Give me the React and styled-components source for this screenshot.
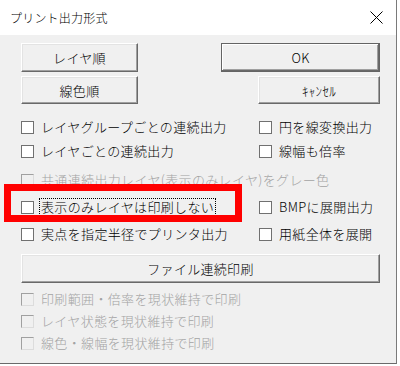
import React from "react";
import styled, { createGlobalStyle } from "styled-components";

const GlobalStyle = createGlobalStyle`
  html, body {
    margin: 0;
    padding: 0;
    background: #ffffff;
  }
  body {
    font-family: "Noto Sans CJK JP", "Noto Sans", sans-serif;
    font-size: 13px;
    font-weight: 300;
    color: #000;
  }
`;

const Window = styled.div`
  position: relative;
  width: 396px;
  height: 363px;
  background: #f0f0f0;
  border-right: 1px solid #7a7a7a;
  border-bottom: 1px solid #6a6a6a;
  display: flex;
  flex-direction: column;
  overflow: hidden;
`;

const TitleBar = styled.div`
  height: 35px;
  flex: none;
  background: #ffffff;
  display: flex;
  align-items: center;
  justify-content: space-between;
  padding: 0 12px 0 10px;
`;

const Title = styled.span`
  font-size: 12px;
  letter-spacing: 0.2px;
  color: #000;
`;

const CloseIcon = styled.svg`
  display: block;
  width: 13px;
  height: 13px;
  margin-right: 1px;
`;

const Body = styled.div`
  display: flex;
  flex-direction: column;
  padding: 8px 16px 0 21px;
`;

const ButtonRow = styled.div`
  display: flex;
  justify-content: space-between;
  margin-top: ${(p) => p.$top || 0}px;
`;

const Button = styled.div`
  box-sizing: border-box;
  width: ${(p) => p.$w}px;
  height: ${(p) => p.$h}px;
  display: flex;
  align-items: center;
  justify-content: center;
  background: #f0f0f0;
  border-top: 1px solid #ffffff;
  border-left: 1px solid #ffffff;
  border-right: 1px solid #696969;
  border-bottom: 1px solid #696969;
  box-shadow: inset -1px -1px 0 #a0a0a0, inset 1px 1px 0 #e3e3e3;
  font-size: 13px;
  letter-spacing: 0.3px;
`;

const DefaultButton = styled(Button)`
  border: 1px solid #646464;
  box-shadow: inset -1px -1px 0 #696969, inset 1px 1px 0 #ffffff,
    inset -2px -2px 0 #a0a0a0;
`;

const Row = styled.div`
  display: flex;
  height: 20px;
  margin-top: ${(p) => p.$top || 0}px;
`;

const Cell = styled.div`
  display: flex;
  align-items: center;
  width: ${(p) => (p.$w ? `${p.$w}px` : "auto")};
  flex: ${(p) => (p.$w ? "none" : "1")};
  white-space: nowrap;
`;

const Box = styled.span`
  box-sizing: border-box;
  flex: none;
  width: 13px;
  height: 13px;
  margin-right: 7px;
  background: ${(p) => (p.$disabled ? "#f0f0f0" : "#ffffff")};
  border: 1px solid ${(p) => (p.$disabled ? "#dcdcdc" : "#707070")};
  border-top-color: ${(p) => (p.$disabled ? "#a0a0a0" : "#707070")};
  border-left-color: ${(p) => (p.$disabled ? "#a0a0a0" : "#707070")};
`;

const Label = styled.span`
  font-size: 13px;
  letter-spacing: 0.35px;
  color: ${(p) => (p.$disabled ? "#a3a3a3" : "#000")};
  line-height: 16px;
`;

const FocusLabel = styled(Label)`
  outline: 1px dotted #000;
  outline-offset: 0;
  margin-left: -1px;
  padding: 0 1px;
`;

const Highlight = styled.div`
  position: absolute;
  left: 4px;
  top: 184px;
  width: 238px;
  height: 38px;
  box-sizing: border-box;
  border: 7px solid #ff0000;
  pointer-events: none;
`;

function Check({ label, disabled, focus }) {
  const Text = focus ? FocusLabel : Label;
  return (
    <>
      <Box $disabled={disabled} />
      <Text $disabled={disabled}>{label}</Text>
    </>
  );
}

export default function App() {
  return (
    <>
      <GlobalStyle />
      <Window>
        <TitleBar>
          <Title>プリント出力形式</Title>
          <CloseIcon viewBox="0 0 13 13">
            <path d="M0.5 0.5 L12.5 12.5 M12.5 0.5 L0.5 12.5" stroke="#000" strokeWidth="1" fill="none" />
          </CloseIcon>
        </TitleBar>
        <Body>
          <ButtonRow>
            <Button $w={117} $h={29}>レイヤ順</Button>
            <DefaultButton $w={159} $h={29}>OK</DefaultButton>
          </ButtonRow>
          <ButtonRow $top={4}>
            <Button $w={117} $h={28}>線色順</Button>
            <Button $w={122} $h={28}>ｷｬﾝｾﾙ</Button>
          </ButtonRow>

          <Row $top={13}>
            <Cell $w={238}><Check label="レイヤグループごとの連続出力" /></Cell>
            <Cell><Check label="円を線変換出力" /></Cell>
          </Row>
          <Row $top={4}>
            <Cell $w={238}><Check label="レイヤごとの連続出力" /></Cell>
            <Cell><Check label="線幅も倍率" /></Cell>
          </Row>
          <Row $top={9}>
            <Cell><Check label="共通連続出力レイヤ(表示のみレイヤ)をグレー色" disabled /></Cell>
          </Row>
          <Row $top={7}>
            <Cell $w={238}><Check label="表示のみレイヤは印刷しない" focus /></Cell>
            <Cell><Check label="BMPに展開出力" /></Cell>
          </Row>
          <Row $top={7}>
            <Cell $w={238}><Check label="実点を指定半径でプリンタ出力" /></Cell>
            <Cell><Check label="用紙全体を展開" /></Cell>
          </Row>

          <ButtonRow $top={10}>
            <Button $w={359} $h={29}>ファイル連続印刷</Button>
          </ButtonRow>

          <Row $top={6}>
            <Cell><Check label="印刷範囲・倍率を現状維持で印刷" disabled /></Cell>
          </Row>
          <Row $top={2}>
            <Cell><Check label="レイヤ状態を現状維持で印刷" disabled /></Cell>
          </Row>
          <Row $top={2}>
            <Cell><Check label="線色・線幅を現状維持で印刷" disabled /></Cell>
          </Row>
        </Body>
        <Highlight />
      </Window>
    </>
  );
}
